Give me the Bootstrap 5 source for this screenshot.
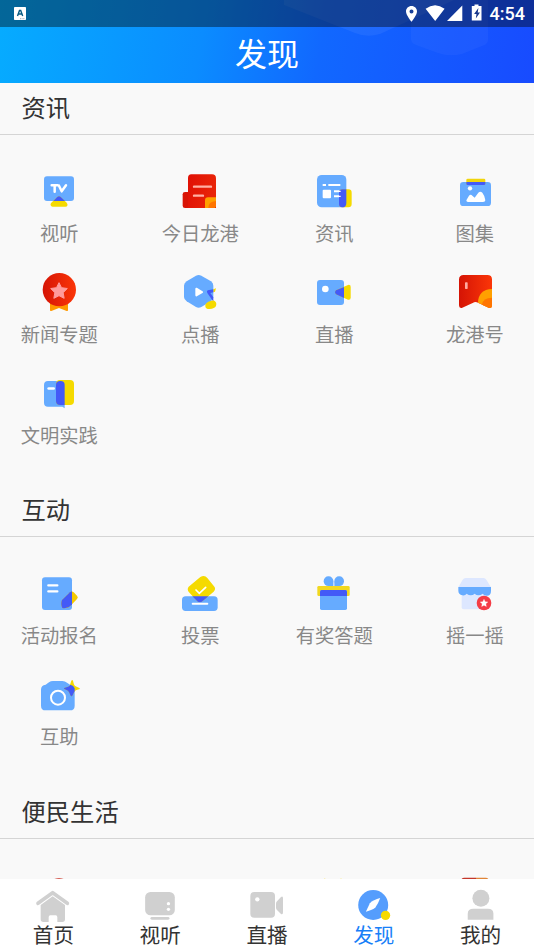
<!DOCTYPE html>
<html lang="zh-CN">
<head>
<meta charset="utf-8">
<meta name="viewport" content="width=device-width, initial-scale=1">
<title>发现</title>
<link rel="stylesheet" href="https://cdn.jsdelivr.net/npm/bootstrap@5.3.0/dist/css/bootstrap.min.css">
<style>
body{font-family:"Noto Sans CJK SC",sans-serif;background:#f9f9f9;color:#333}
.app{height:950px}
.top{height:83px;background:linear-gradient(100deg,#06acff 0%,#0b8cff 38%,#1168ff 60%,#184bff 100%)}
.decor{left:284px;top:0;width:210px;height:60px}
.status{height:27px;background:rgba(0,0,0,.4);padding:0 9px 0 14px}
.clock{font:500 18px/27px Roboto,sans-serif}
.title{font-size:32px;line-height:50px;height:56px;font-weight:400}
.sec-title{height:52px;font-size:24.3px;line-height:48px;padding-left:21.5px;border-bottom:1px solid #d5d5d5;font-weight:400}
.tiles{grid-template-columns:141px 134px 140.500px 100px;grid-auto-rows:101px;padding:33px 0 0 9.300px}
.s1{height:350px}.s2{height:249.5px}
.tile{width:100px;font-size:19.3px;color:#888;line-height:30px;white-space:nowrap}
.tile svg{width:48px;height:48px;display:block;margin-bottom:1.5px}
.tabs{height:71px;background:#fff}
.tabs a{color:#333;font-size:20.6px;line-height:26px;padding-top:10px}
.tabs a.on{color:#1880f8}
.tabs svg{width:48px;height:32px;display:block}
</style>
<script src="https://cdn.jsdelivr.net/npm/bootstrap@5.3.0/dist/js/bootstrap.bundle.min.js"></script>
</head>
<body>
<svg class="position-absolute" width="0" height="0" aria-hidden="true"><defs>
<linearGradient id="red"><stop stop-color="#d51405"/><stop offset="1" stop-color="#fb3608"/></linearGradient>
<linearGradient id="red2" x1="0" x2="1" y2="0.25"><stop stop-color="#e01005"/><stop offset="1" stop-color="#e92508"/></linearGradient>
</defs></svg>
<div class="app d-flex flex-column overflow-hidden">
<header class="top position-relative flex-shrink-0 text-white">
<svg class="decor position-absolute" viewBox="0 0 210 60" fill="#fff"><path d="M0 0H170L96 34Q83 38 71 33L0 5Z" fill-opacity=".06"/><path d="M127 0H204V40Q204 44 198 46L178 54Q165 57 154 53L132 45Q127 43 127 39Z" fill-opacity=".035"/></svg>
<div class="status position-relative d-flex align-items-center justify-content-between">
<svg width="12" height="13" viewBox="0 0 12 13"><rect width="12" height="13" rx=".7" fill="#fff"/><path d="M3.500 9 5.500 3.400h1.200L8.700 9M4.400 7h3.400" fill="none" stroke="#075a82" stroke-width="1.4"/><path d="M6 11.700h5" stroke="#789" stroke-width=".7" stroke-dasharray="1 .6"/></svg>
<div class="d-flex align-items-center">
<svg width="86" height="27" viewBox="403 0 86 27" fill="#fff"><path fill-rule="evenodd" d="M410.500 6c-3.200 0-5.500 2.400-5.500 5.500 0 3.700 5.500 10.200 5.500 10.200s5.500-6.500 5.500-10.200c0-3.100-2.300-5.500-5.500-5.500zm0 7.400a2 2 0 1 1 0-4 2 2 0 0 1 0 4z"/><path d="M424.600 8.800q9.500-7.200 19 0L434.200 21zM446 21 461.300 5.500V21zM473.500 4.500h4V6h3v14.500h-9.700V6h2.700z"/><path d="m477.400 8-4.300 5.900h2.400l-.7 4.500 4.200-5.900h-2.300z" fill="#17368a"/></svg>
<span class="clock">4:54</span></div>
</div>
<h1 class="title position-relative text-center mb-0">发现</h1>
</header>

<main class="flex-grow-1 overflow-hidden">
<h2 class="sec-title mb-0">资讯</h2>
<div class="tiles s1 d-grid">
<div class="tile d-flex flex-column align-items-center"><svg viewBox="105 24 144 144"><rect x="132" y="49" width="90" height="74" rx="9" fill="#66abff"/><path d="M152 136Q150 132 154 128L171 112Q177 106 183 112L200 128Q204 132 202 137Q201 140 196 140H158Q153 140 152 136Z" fill="#f5da00"/><path d="M160 123 171 112Q177 106 183 112L195 123Z" fill="#435af7"/><path d="M155 76H173M164 76V95M177 77 185 94 198 76" fill="none" stroke="#fff" stroke-width="7.500" stroke-linecap="round" stroke-linejoin="round"/></svg>视听</div>
<div class="tile d-flex flex-column align-items-center"><svg viewBox="528 24 144 144"><rect x="548" y="96" width="30" height="48" rx="7" fill="#d91405"/><path d="M574 43H636Q648 43 648 55V144H564V55Q564 43 574 43Z" fill="url(#red2)"/><path d="M582 80H633M582 107H609" stroke="#ffb0a4" stroke-width="7" stroke-linecap="round"/><path d="M615 144V121Q615 112 624 112H648V134Q648 144 638 144Z" fill="#ffa000"/><path d="M625 144Q624 125 648 123V134Q648 144 638 144Z" fill="#ff7500"/></svg>今日龙港</div>
<div class="tile d-flex flex-column align-items-center"><svg viewBox="129 24 144 144"><rect x="150" y="45" width="88" height="97" rx="14" fill="#66abff"/><path d="M167 75H177M184 75H220M201 94H220M201 109H220" stroke="#fff" stroke-width="6"/><rect x="167" y="89" width="25" height="26" rx="3" fill="#fff"/><rect x="216" y="88" width="38" height="54" rx="10" fill="#f5da00"/><path d="M238 88H226Q216 88 216 98V132Q216 142 226 142Q238 142 238 128Z" fill="#435af7"/><path d="M216 94H221M216 109H221" stroke="#fff" stroke-width="4"/></svg>资讯</div>
<div class="tile d-flex flex-column align-items-center"><svg viewBox="549 24 144 144"><rect x="576" y="66" width="93" height="72" rx="10" fill="#66abff"/><rect x="595" y="56" width="57" height="19" rx="4" fill="#f1d50c"/><path d="M595 66H652V71Q652 75 648 75H599Q595 75 595 71Z" fill="#435af7"/><circle cx="606" cy="85" r="6.500" fill="#fff"/><path d="M595 121 603 107Q608 101 613 107L620 113 631 98Q637 92 643 98Q650 106 652 121Q652 126 645 126H600Q595 126 595 121Z" fill="#fff"/></svg>图集</div>

<div class="tile d-flex flex-column align-items-center"><svg viewBox="105 27 144 144"><path d="M150 125H204V151Q204 154 200 153L177 144 154 153Q150 154 150 151Z" fill="#ff9a00"/><circle cx="178" cy="89" r="50" fill="url(#red)"/><path d="m177 68 7.500 15 17.500 2.500-12.500 12.500 3 17-15.500-8-15.500 8 3-17L152 85.500l17.500-2.500z" fill="#ff9b9b" stroke="#ff9b9b" stroke-width="3" stroke-linejoin="round"/></svg>新闻专题</div>
<div class="tile d-flex flex-column align-items-center"><svg viewBox="528 27 144 144"><path d="M588 47Q596 43 604 47L633 64Q640 69 640 77V112Q640 119 633 124L604 141Q596 145 588 141L560 124Q552 119 552 111V77Q552 69 560 64Z" fill="#66abff"/><path d="M589 86 606 96.500 589 106Z" fill="#fff" stroke="#fff" stroke-width="6" stroke-linejoin="round"/><path d="M640 88 648 85 645 95 640 97Z" fill="#f5da00"/><path d="M616 134Q622 124 640 121Q652 126 648 138Q644 146 629 147Q615 147 616 137Z" fill="#f5da00"/><path d="M640 88 623 91Q619 94 622 99L637 121 640 122 640 112 631 99 640 97Z" fill="#435af7"/></svg>点播</div>
<div class="tile d-flex flex-column align-items-center"><svg viewBox="129 27 144 144"><rect x="150" y="60" width="81" height="75" rx="9" fill="#66abff"/><circle cx="175" cy="87" r="10" fill="#fff"/><path d="M207 91 243 75Q251 73 251 81V113Q251 121 243 119L207 103Q201 97 207 91Z" fill="#f5da00"/><path d="M207 91 231 81V114L207 103Q201 97 207 91Z" fill="#435af7"/></svg>直播</div>
<div class="tile d-flex flex-column align-items-center"><svg viewBox="549 27 144 144"><path d="M587 45H658Q672 45 672 58V136Q672 146 662 143L630 128Q622 123 614 129L583 143Q573 146 573 136V59Q573 45 587 45Z" fill="url(#red)"/><rect x="591" y="67" width="8" height="20" rx="2" fill="#ffaaa0"/><path d="M630 128Q631 89 672 87V136Q672 146 662 143Z" fill="#ffa000"/><path d="M642 134Q645 113 672 113V136Q672 146 662 143Z" fill="#ff7500"/></svg>龙港号</div>

<div class="tile d-flex flex-column align-items-center"><svg viewBox="105 15 144 144"><path d="M144 48H182Q194 48 194 60V130L187 125H144Q132 125 132 113V60Q132 48 144 48Z" fill="#66abff"/><rect x="168" y="45" width="54" height="75" rx="12" fill="#f5da00"/><path d="M180 48H182Q194 48 194 60V120H180Q168 120 168 108V59Q168 48 180 48Z" fill="#435af7"/><path d="M146 70.500H161" stroke="#fff" stroke-width="8" stroke-linecap="round"/></svg>文明实践</div>
</div>

<h2 class="sec-title mb-0">互动</h2>
<div class="tiles s2 d-grid">
<div class="tile d-flex flex-column align-items-center"><svg viewBox="105 15 144 144"><rect x="126" y="37" width="90" height="98" rx="9" fill="#66abff"/><path d="M145 61H172M145 79H172" stroke="#fff" stroke-width="7" stroke-linecap="round"/><path d="M186 105 210 82Q216 77 221 82L231 92Q236 97 231 102L211 123Q202 132 187 129Q181 118 186 105Z" fill="#f5c900"/><path d="M186 105 210 82 216 79V118Q204 132 187 129Q181 118 186 105Z" fill="#435af7"/></svg>活动报名</div>
<div class="tile d-flex flex-column align-items-center"><svg viewBox="528 15 144 144"><rect x="546" y="94" width="107" height="44" rx="11" fill="#66abff"/><path d="M566 65 601 36Q614 29 622 39L642 64Q649 72 641 80L609 107Q598 117 589 106L567 82Q560 73 566 65Z" fill="#f5da00"/><path d="M577 94H625L609 107Q598 117 589 106Z" fill="#435af7"/><path d="M588 75 598 85 617 67" fill="none" stroke="#fff" stroke-width="5" stroke-linecap="round"/><path d="M578 116H622" stroke="#fff" stroke-width="6" stroke-linecap="round"/></svg>投票</div>
<div class="tile d-flex flex-column align-items-center"><svg viewBox="129 15 144 144"><rect x="170" y="34" width="29" height="29" rx="14" fill="#66abff"/><rect x="202" y="34" width="29" height="29" rx="14" fill="#66abff"/><path d="M185 49H199V63H185M216 49H202V63H216" fill="#66abff"/><path d="M200.500 45V63" stroke="#b4d5ff" stroke-width="2"/><rect x="151" y="63" width="97" height="30" rx="4" fill="#f1d820"/><rect x="159" y="75" width="81" height="60" rx="5" fill="#66abff"/><path d="M159 93V80Q159 75 164 75H235Q240 75 240 80V93Z" fill="#435af7"/></svg>有奖答题</div>
<div class="tile d-flex flex-column align-items-center"><svg viewBox="549 15 144 144"><path d="M581 80H657V127Q657 133 651 133H587Q581 133 581 127Z" fill="#dde7ff"/><path d="M593 39H647Q652 39 655 44L669 67H571L584 44Q587 39 593 39Z" fill="#dde7ff"/><path d="M571 66H669V77Q669 92 657 92Q648 92 644 86Q638 91 631 91Q625 91 620 86Q615 91 608 91Q602 91 596 86Q591 93 583 91Q571 88 571 77Z" fill="#66abff"/><circle cx="648" cy="114" r="22" fill="#f43c46"/><path d="m648 103 3.500 7 8 1-6 5.500 1.500 8-7-4-7 4 1.500-8-6-5.500 8-1z" fill="#fff" stroke="#fff" stroke-width="1" stroke-linejoin="round"/></svg>摇一摇</div>
<div class="tile d-flex flex-column align-items-center"><svg viewBox="105 3 144 144"><path d="M123 59Q123 45 137 44L147 37Q152 33 159 33H187Q195 33 201 38L210 44Q224 46 224 59V107Q224 121 210 121H137Q123 121 123 107Z" fill="#66abff"/><circle cx="174" cy="83" r="21" fill="none" stroke="#fff" stroke-width="6"/><path d="M214 32Q217 28 219 32Q222 47 227 49L238 54Q242 56 238 58Q225 61 223 65L217 77Q214 81 211 76Q208 65 204 62L193 57Q190 55 194 53Q207 50 209 47Z" fill="#f5da00"/><path d="M211 44.500Q221 47 224 55V63L217 77Q214 81 211 76Q208 65 204 62L193 57Q190 55 194 53Q207 50 209 47Z" fill="#435af7"/></svg>互助</div>
</div>

<h2 class="sec-title mb-0">便民生活</h2>
<div class="tiles d-grid">
<div class="tile d-flex flex-column align-items-center"><svg viewBox="0 0 144 144"><circle cx="72" cy="69" r="50" fill="#c92d20"/></svg></div>
<div class="tile"></div>
<div class="tile d-flex flex-column align-items-center"><svg viewBox="0 0 144 144"><path d="M44 20V38M93 20V38" stroke="#f5d820" stroke-width="4"/></svg></div>
<div class="tile d-flex flex-column align-items-center"><svg viewBox="0 0 144 144"><path d="M40 17H75V108H31V26Q31 17 40 17Z" fill="#c4372a"/><path d="M75 17H104Q113 17 113 27V108H75Z" fill="#e08538"/></svg></div>
</div>
</main>

<nav class="tabs d-flex flex-shrink-0">
<a class="col text-decoration-none d-flex flex-column align-items-center" href="#"><svg viewBox="88 72 144 96" overflow="visible" fill="#d0d0d0"><path d="M115 115 159 83 203 115" fill="none" stroke="#d0d0d0" stroke-width="11" stroke-linecap="round" stroke-linejoin="round"/><path d="M159 94 196 120V163Q196 171 188 171H173V157Q173 151 168 151H152Q147 151 147 157V171H131Q123 171 123 163V120Z"/></svg>首页</a>
<a class="col text-decoration-none d-flex flex-column align-items-center" href="#"><svg viewBox="408.600 72 144 96"><rect x="436" y="81" width="89" height="70" rx="16" fill="#d0d0d0"/><circle cx="506" cy="116" r="5" fill="#fff"/><circle cx="506" cy="133" r="5" fill="#fff"/><path d="M456 160H505" stroke="#d0d0d0" stroke-width="8" stroke-linecap="round"/></svg>视听</a>
<a class="col text-decoration-none d-flex flex-column align-items-center" href="#"><svg viewBox="729 72 144 96" fill="#d0d0d0"><rect x="751" y="81" width="74" height="77" rx="12"/><circle cx="772" cy="103" r="6.500" fill="#fff"/><path d="M831 109 843 96Q849 92 849 100V142Q849 150 843 147L831 135Q828 132 828 128V116Q828 112 831 109Z"/></svg>直播</a>
<a class="on col text-decoration-none d-flex flex-column align-items-center" href="#"><svg viewBox="248.400 72 144 96"><circle cx="318" cy="120" r="45" fill="#559dfd"/><path d="M296 140 308 115Q318 104 339 99Q332 118 325 127Q316 136 296 140Z" fill="#fff"/><circle cx="355" cy="151" r="14" fill="#f5da00"/></svg>发现</a>
<a class="col text-decoration-none d-flex flex-column align-items-center" href="#"><svg viewBox="568.800 72 144 96" fill="#d0d0d0"><circle cx="640.500" cy="100" r="25.500"/><path d="M618 131H662Q678 131 678 146V164H601V146Q601 131 618 131Z"/></svg>我的</a>
</nav>
</div>
</body>
</html>
